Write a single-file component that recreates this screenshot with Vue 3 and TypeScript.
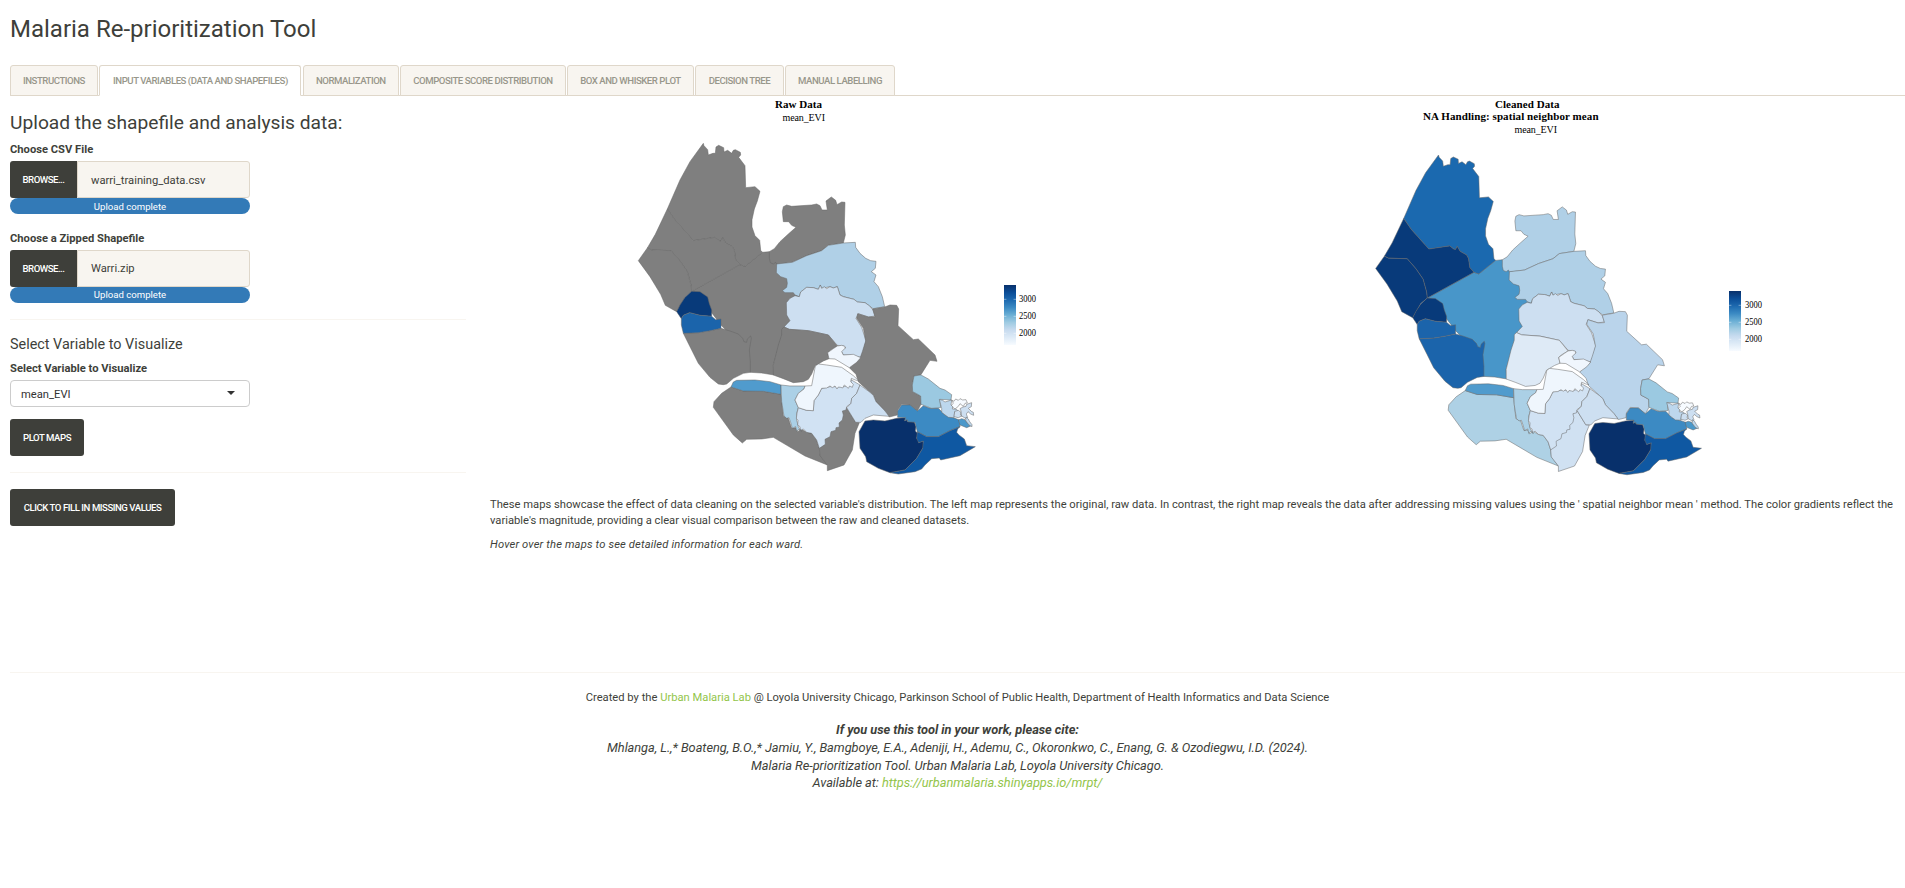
<script setup lang="ts">
import { ref } from 'vue'

interface Ward {
  raw: string
  clean: string
  points: string
}

interface Upload {
  label: string
  file: string
}

const tabs = [
  { name: 'Instructions', width: 87.9 },
  { name: 'Input Variables (Data and Shapefiles)', width: 201.9 },
  { name: 'Normalization', width: 95.7 },
  { name: 'Composite Score Distribution', width: 165.4 },
  { name: 'Box and Whisker Plot', width: 126.4 },
  { name: 'Decision Tree', width: 88.4 },
  { name: 'Manual Labelling', width: 109.7 },
]
const active = ref(1)

const uploads: Upload[] = [
  { label: 'Choose CSV File', file: 'warri_training_data.csv' },
  { label: 'Choose a Zipped Shapefile', file: 'Warri.zip' },
]

const na = '#7f7f7f'

// Ward outlines share one local coordinate space; later wards overlap earlier ones.
const wards: Ward[] = [
  { raw: na, clean: '#4896c9', points: '185,589 330,509 345,514 397,472 418,470 440,500 500,540 510,600 480,690 460,698 455,725 445,760 430,810 432,840 395,834 361,832 340,760 273,690 235,640 220,600' },
  { raw: na, clean: '#1b69af', points: '220,145 222,152 233,164 235,180 249,175 256,175 258,156 266,151 281,158 282,171 293,166 305,175 310,166 316,164 331,172 332,180 326,187 345,212 347,278 375,275 390,289 382,318 373,342 366,374 366,396 375,422 389,436 392,466 397,472 345,514 330,509 317,494 313,466 307,455 287,444 278,428 273,438 267,437 255,427 190,437 135,375 112,342 150,255 180,200' },
  { raw: na, clean: '#083a7a', points: '112,342 135,375 190,437 255,427 267,437 273,438 278,428 287,444 307,455 313,466 317,494 330,509 185,589 183,570 172,530 150,498 123,467 65,465 52,459 76,418' },
  { raw: na, clean: '#083a7a', points: '52,459 65,465 123,467 150,498 172,530 183,570 185,589 165,606 140,650 106,631 92,598 60,545 25,497' },
  { raw: na, clean: '#1b64ab', points: '160,715 205,713 240,707 273,700 300,708 325,717 338,730 342,740 350,742 352,732 362,723 364,730 358,765 361,800 361,832 340,835 310,850 290,867 280,869 265,867 240,847 205,805 185,765' },
  { raw: '#083a7a', clean: '#083a7a', points: '185,589 210,590 233,606 238,626 245,645 245,664 210,661 179,653 160,661 154,671 140,650 150,630 165,607' },
  { raw: '#1b64ab', clean: '#1b64ab', points: '154,671 160,661 179,653 210,661 245,664 257,674 273,672 273,700 240,707 205,713 160,715 154,690' },
  { raw: na, clean: '#b0d0e7', points: '418,470 433,461 450,440 475,417 498,397 485,391 476,380 460,380 457,350 460,335 470,330 485,334 545,330 560,327 570,332 576,345 592,345 588,318 604,306 617,316 621,329 635,321 645,322 643,390 646,420 640,444 595,451 575,467 530,482 487,502 440,508 437,502 430,507 421,503 418,490' },
  { raw: '#b0d0e7', clean: '#b0d0e7', points: '440,507 487,502 530,482 575,467 595,451 640,444 676,442 677,457 690,475 707,490 722,497 738,499 736,520 724,530 738,540 732,560 745,575 757,605 764,635 729,641 705,623 682,621 672,613 640,605 630,600 622,575 610,579 600,575 575,580 571,570 565,583 550,578 530,577 512,591 508,605 495,600 490,593 465,593 457,587 470,577 472,565 470,551 452,545 439,533' },
  { raw: '#cddff1', clean: '#cddff1', points: '508,605 512,591 530,577 550,578 565,583 571,570 575,580 583,575 590,581 600,575 610,579 622,575 630,600 640,605 672,613 682,621 705,623 718,632 729,645 735,663 715,666 685,656 678,670 695,697 708,737 700,770 693,787 660,780 640,780 634,768 647,758 642,753 622,751 595,720 535,707 478,703 462,696 480,677 470,660 469,623 480,610 495,602' },
  { raw: na, clean: '#deeaf6', points: '462,696 478,703 535,707 595,720 622,753 602,765 593,773 597,791 580,798 555,813 545,837 535,853 520,860 490,863 460,851 430,840 430,810 445,750 455,720 455,703' },
  { raw: na, clean: '#bad4eb', points: '764,636 780,630 800,631 806,642 804,692 850,734 865,732 915,780 921,799 900,796 873,839 852,843 847,870 848,890 872,903 873,928 862,948 840,930 815,928 803,945 802,960 778,966 765,948 738,920 730,901 720,892 685,860 678,838 658,818 690,790 697,770 707,738 700,700 680,670 683,656 715,666 735,665 728,642' },
  { raw: '#f0f6fd', clean: '#f0f6fd', points: '622,753 635,751 645,754 645,760 635,770 640,780 670,778 692,788 680,802 658,818 615,792 597,791 593,773 610,761' },
  { raw: na, clean: '#aed1e5', points: '303,876 340,888 400,889 453,898 460,963 475,970 485,1000 497,998 503,1010 513,1002 530,1012 545,1015 560,1035 568,1060 570,1080 592,1110 525,1083 430,1027 395,1032 350,1033 337,1044 310,1020 250,937 252,920 275,895' },
  { raw: '#509bcd', clean: '#509bcd', points: '320,856 375,855 420,860 453,870 453,898 400,889 340,888 303,876 310,861' },
  { raw: '#abd0e6', clean: '#abd0e6', points: '453,870 480,873 525,873 522,882 505,895 495,915 505,938 500,955 500,975 505,995 514,1010 507,1002 500,1009 497,995 487,1000 483,985 477,968 470,970 462,963 455,920' },
  { raw: na, clean: '#d0e1f2', points: '650,938 677,982 688,983 675,1015 667,1065 642,1110 592,1127 592,1110 570,1082 568,1060 570,1000' },
  { raw: '#d1e2f3', clean: '#d1e2f3', points: '505,938 530,946 550,947 552,917 565,900 575,880 600,875 640,875 663,870 663,854 690,870 680,895 665,910 663,925 650,935 648,945 637,948 640,960 637,975 627,984 628,996 618,998 617,1006 603,1010 600,1025 585,1033 586,1048 568,1060 560,1035 545,1015 530,1012 520,1002 512,1006 510,995 503,990 504,976 499,970 501,955' },
  { raw: '#cddff1', clean: '#cddff1', points: '690,870 720,892 730,901 738,920 765,948 777,964 730,960 705,970 693,982 677,982 650,938 663,925 665,910 680,895' },
  { raw: '#eff6fd', clean: '#eff6fd', points: '525,873 545,872 556,813 565,807 590,810 635,817 670,842 687,858 676,855 664,850 662,860 670,868 667,877 659,873 655,880 643,870 638,879 632,877 625,876 621,882 615,873 607,878 600,873 590,879 575,880 565,900 552,917 550,947 530,946 505,938 495,915 505,895 522,882' },
  { raw: '#08306b', clean: '#08306b', points: '705,978 730,975 765,978 800,970 827,968 824,977 832,974 833,980 853,981 858,995 856,1008 863,1015 860,1030 866,1035 866,1043 880,1038 880,1057 860,1090 825,1125 780,1133 745,1120 710,1100 707,1085 690,1060 687,1010' },
  { raw: '#3c8ac3', clean: '#3c8ac3', points: '803,967 803,948 815,930 840,930 862,948 880,932 900,940 925,940 945,960 975,970 988,975 990,995 960,1007 925,1025 890,1025 862,1010 855,982 833,980 832,974 824,977 827,968' },
  { raw: '#0f58a2', clean: '#0f58a2', points: '862,1010 890,1025 925,1025 960,1007 990,995 983,1002 980,1012 987,1020 1003,1032 1010,1052 1036,1055 990,1082 932,1095 928,1089 905,1091 885,1110 875,1122 855,1130 805,1137 780,1133 825,1125 860,1090 878,1060 880,1038 866,1043 860,1030' },
  { raw: '#9bc9e1', clean: '#9bc9e1', points: '873,840 895,852 930,880 945,885 965,899 963,915 930,913 932,938 905,940 873,928 872,903 860,896 848,890 847,870 852,843' },
  { raw: '#f7fbff', clean: '#f7fbff', points: '965,915 972,919 977,912 985,916 990,911 998,915 1008,914 1012,924 1005,925 1000,934 990,926 985,934 975,942 963,932 970,925' },
  { raw: '#bdd7ed', clean: '#bdd7ed', points: '928,913 938,916 945,921 965,915 963,930 968,935 967,942 980,943 985,950 974,951 972,968 955,967 935,952 935,940' },
  { raw: '#cddff1', clean: '#cddff1', points: '974,949 985,946 993,952 991,960 996,963 985,968 972,965' },
  { raw: '#cddff1', clean: '#cddff1', points: '993,948 990,941 999,936 1008,934 1010,928 1025,923 1024,935 1015,940 1024,949 1030,952 1031,961 1022,957 1014,950 1009,957 1013,968 1008,971 995,963' },
  { raw: '#4a98ca', clean: '#4a98ca', points: '985,975 995,971 1005,974 1015,987 1022,993 1010,998 990,990' },
  { raw: '#bdd7ed', clean: '#bdd7ed', points: '1008,966 1015,972 1019,980 1026,989 1026,995 1017,990 1007,977' },
]

const ramp = ['#08306b', '#0b4d97', '#1d69af', '#3b8ac3', '#6bafd5', '#9fcbe2', '#c7dbef', '#deebf7', '#f7fbff']
</script>

<template>
  <div class="page">
    <h2 class="title">Malaria Re-prioritization Tool</h2>

    <ul class="tabs">
      <li
        v-for="(tab, i) in tabs"
        :key="tab.name"
        class="tab"
        :class="{ active: active === i }"
        :style="{ width: tab.width + 'px' }"
        @click="active = i"
      >{{ tab.name }}</li>
    </ul>

    <div class="columns">
      <aside class="side">
        <h3>Upload the shapefile and analysis data:</h3>
        <div v-for="u in uploads" :key="u.label" class="upload">
          <label class="lbl">{{ u.label }}</label>
          <div class="file">
            <span class="browse">Browse...</span>
            <span class="name">{{ u.file }}</span>
          </div>
          <div class="progress">Upload complete</div>
        </div>
        <hr class="rule" />
        <h4>Select Variable to Visualize</h4>
        <label class="lbl">Select Variable to Visualize</label>
        <div class="select"><span>mean_EVI</span><i class="caret"></i></div>
        <button class="btn plot">Plot maps</button>
        <hr class="rule" />
        <button class="btn fill">Click to fill in missing values</button>
      </aside>

      <main class="main">
        <div class="maps">
          <svg class="map" width="700" height="392" viewBox="490 96 700 392">
            <defs>
              <linearGradient id="blues" x1="0" y1="0" x2="0" y2="1">
                <stop v-for="(c, i) in ramp" :key="c" :offset="i / (ramp.length - 1)" :stop-color="c" />
              </linearGradient>
            </defs>
            <text class="head" x="775" y="108" textLength="47">Raw Data</text>
            <text class="sub" x="782.5" y="121" textLength="42.5">mean_EVI</text>
            <g transform="translate(630 95) scale(0.33333)">
              <polygon v-for="(w, i) in wards" :key="i" class="ward" :points="w.points" :fill="w.raw" />
            </g>
            <rect x="1004" y="285" width="12" height="60" fill="url(#blues)" />
            <path class="tick" d="M1004 299.3h2.4M1013.6 299.3h2.4M1004 316.3h2.4M1013.6 316.3h2.4M1004 333.3h2.4M1013.6 333.3h2.4" />
            <text class="num" x="1019" y="302.3" textLength="17" lengthAdjust="spacingAndGlyphs">3000</text>
            <text class="num" x="1019" y="319.3" textLength="17" lengthAdjust="spacingAndGlyphs">2500</text>
            <text class="num" x="1019" y="336.3" textLength="17" lengthAdjust="spacingAndGlyphs">2000</text>
          </svg>
          <svg class="map" width="700" height="392" viewBox="1190 96 700 392">
            <text class="head" x="1495" y="108" textLength="64.5">Cleaned Data</text>
            <text class="head" x="1423" y="120" textLength="175.5">NA Handling: spatial neighbor mean</text>
            <text class="sub" x="1514.5" y="133" textLength="42.5">mean_EVI</text>
            <g transform="translate(1438.5 155) scale(0.3223) translate(-220 -145)">
              <polygon v-for="(w, i) in wards" :key="i" class="ward" :points="w.points" :fill="w.clean" />
            </g>
            <rect x="1729" y="291" width="12" height="60" fill="url(#blues)" />
            <path class="tick" d="M1729 305.3h2.4M1738.6 305.3h2.4M1729 322.3h2.4M1738.6 322.3h2.4M1729 339.3h2.4M1738.6 339.3h2.4" />
            <text class="num" x="1745" y="308.3" textLength="17" lengthAdjust="spacingAndGlyphs">3000</text>
            <text class="num" x="1745" y="325.3" textLength="17" lengthAdjust="spacingAndGlyphs">2500</text>
            <text class="num" x="1745" y="342.3" textLength="17" lengthAdjust="spacingAndGlyphs">2000</text>
          </svg>
        </div>
        <p>These maps showcase the effect of data cleaning on the selected variable's distribution. The left map represents the original, raw data. In contrast, the right map reveals the data after addressing missing values using the ' spatial neighbor mean ' method. The color gradients reflect the variable's magnitude, providing a clear visual comparison between the raw and cleaned datasets.</p>
        <p class="hint"><em>Hover over the maps to see detailed information for each ward.</em></p>
      </main>
    </div>

    <footer class="footer">
      <p class="credit">Created by the <a>Urban Malaria Lab</a> @ Loyola University Chicago, Parkinson School of Public Health, Department of Health Informatics and Data Science</p>
      <div class="cite">
        <b>If you use this tool in your work, please cite:</b><br />
        Mhlanga, L.,* Boateng, B.O.,* Jamiu, Y., Bamgboye, E.A., Adeniji, H., Ademu, C., Okoronkwo, C., Enang, G. &amp; Ozodiegwu, I.D. (2024).<br />
        Malaria Re-prioritization Tool. Urban Malaria Lab, Loyola University Chicago.<br />
        Available at: <a>https://urbanmalaria.shinyapps.io/mrpt/</a>
      </div>
    </footer>
  </div>
</template>

<style>
body {
  margin: 0;
  background: #fff;
}
</style>

<style scoped>
.page {
  box-sizing: border-box;
  min-height: 888px;
  padding-left: 10px;
  font: 11.2px/16px Roboto, sans-serif;
  color: #3e3f3a;
  overflow: hidden;
}
.title {
  margin: 16px 0 23px;
  font-size: 24px;
  line-height: 26px;
  font-weight: 400;
}
.tabs {
  display: flex;
  gap: 1.6px;
  margin: 0;
  padding: 0;
  list-style: none;
  height: 31px;
  box-sizing: border-box;
  border-bottom: 1px solid #dfd7ca;
}
.tab {
  box-sizing: border-box;
  flex: none;
  height: 31px;
  border: 1px solid #dfd7ca;
  border-radius: 3px 3px 0 0;
  background: #f8f5f0;
  color: #98978b;
  font-size: 9.6px;
  line-height: 30px;
  font-weight: 500;
  letter-spacing: -0.46px;
  text-align: center;
  text-transform: uppercase;
  white-space: nowrap;
  cursor: pointer;
}
.tab.active {
  background: #fff;
  border-bottom-color: #fff;
}
.columns {
  display: flex;
  gap: 24px;
  height: 576px;
}
.side {
  width: 456px;
  flex: none;
}
h3 {
  margin: 16px 0 8px;
  font-size: 19.2px;
  line-height: 21px;
  font-weight: 400;
}
h4 {
  margin: 17px 0 7px;
  font-size: 14.4px;
  line-height: 16px;
  font-weight: 400;
}
.lbl {
  display: block;
  padding-top: 1px;
  margin-bottom: 3px;
  font-weight: 700;
}
.upload {
  width: 240px;
  height: 73px;
  margin-bottom: 16px;
}
.file {
  display: flex;
  height: 37px;
}
.browse {
  width: 67px;
  border-radius: 3px 0 0 3px;
  background: #3e3f3a;
  color: #fff;
  font-size: 9.6px;
  line-height: 37px;
  font-weight: 500;
  letter-spacing: -0.5px;
  text-align: center;
  text-transform: uppercase;
}
.name {
  box-sizing: border-box;
  flex: 1;
  height: 37px;
  border: 1px solid #dfd7ca;
  border-radius: 0 3px 3px 0;
  background: #f8f5f0;
  padding-left: 13px;
  line-height: 36px;
}
.progress {
  height: 16px;
  border-radius: 8px;
  background: #337ab7;
  color: #fff;
  font-size: 9.6px;
  line-height: 16px;
  text-align: center;
}
.upload:first-of-type .name {
  line-height: 37px;
}
.upload:first-of-type .progress {
  line-height: 17px;
}
.rule {
  margin: 16px 0;
  border: 0;
  border-top: 1px solid #f8f5f0;
}
.select {
  box-sizing: border-box;
  display: flex;
  align-items: center;
  justify-content: space-between;
  width: 240px;
  height: 27px;
  padding: 2px 14px 0 10px;
  border: 1px solid #ccc;
  border-radius: 4px;
  color: #333;
}
.caret {
  border: 4px solid transparent;
  border-top-color: #333;
  border-bottom: 0;
  margin-bottom: 3px;
}
.btn {
  display: block;
  height: 37px;
  padding: 0;
  border: 0;
  border-radius: 3px;
  background: #3e3f3a;
  color: #fff;
  font: 500 9.6px/37px Roboto, sans-serif;
  letter-spacing: -0.46px;
  text-align: center;
  text-transform: uppercase;
  cursor: pointer;
}
.plot {
  width: 74px;
  margin-top: 12px;
}
.fill {
  width: 165px;
}
.main {
  flex: 1;
  min-width: 0;
  padding-right: 8px;
}
.main p {
  margin: 0 0 8px;
}
.main .hint {
  letter-spacing: 0.15px;
}
.maps {
  display: flex;
  height: 401px;
}
.map {
  flex: none;
}
.ward {
  stroke: #666;
  stroke-opacity: 0.7;
  stroke-width: 2.2;
  stroke-linejoin: round;
}
.head,
.sub,
.num {
  font-family: "Liberation Serif", serif;
  font-size: 11px;
  fill: #000;
}
.head {
  font-weight: 700;
}
.sub {
  font-size: 10px;
}
.num {
  font-size: 9.6px;
}
.tick {
  stroke: #fff;
  stroke-opacity: 0.7;
  stroke-width: 0.6;
}
.footer {
  border-top: 1px solid #f8f5f0;
  text-align: center;
}
.credit {
  margin: 17px 0 15px;
}
.cite {
  font-size: 12.8px;
  line-height: 17.8px;
  font-style: italic;
  letter-spacing: -0.045px;
}
a {
  color: #93c54b;
}
</style>
